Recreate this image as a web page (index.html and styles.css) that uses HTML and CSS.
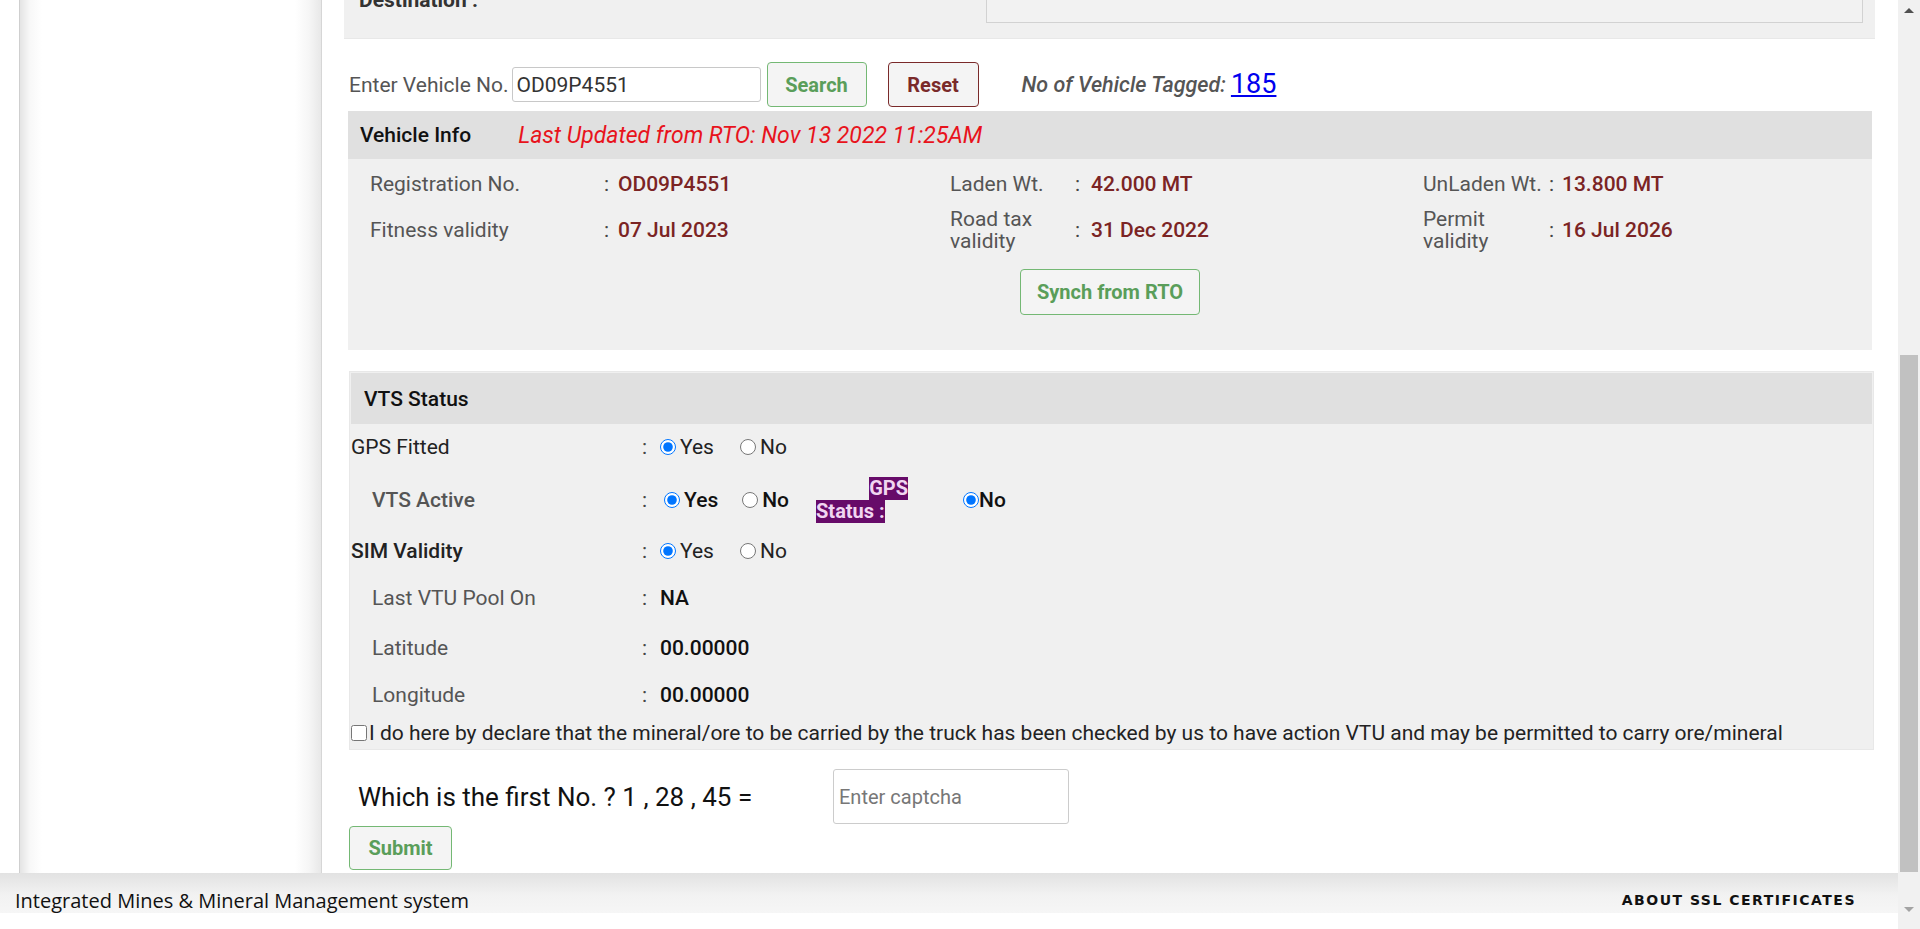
FILE: index.html
```html
<!DOCTYPE html>
<html lang="en">
<head>
<meta charset="utf-8">
<title>Vehicle Tagging</title>
<link rel="stylesheet" href="styles.css">
</head>
<body>
<div class="app">
  <div class="page">
    <div class="main">
      <aside class="sidebar"><div class="sidebar-inner"></div></aside>
      <section class="content">
        <div class="dest-box">
          <div class="dest-label">Destination :</div>
          <div class="dest-field"></div>
        </div>

        <div class="search-row">
          <label class="search-label" for="veh">Enter Vehicle No.</label>
          <input id="veh" class="search-input" type="text" value="OD09P4551">
          <button class="btn btn-green btn-search">Search</button>
          <button class="btn btn-red btn-reset">Reset</button>
          <span class="tagged">No of Vehicle Tagged:</span><a class="tagged-link" href="#">185</a>
        </div>

        <div class="vehicle">
          <div class="panel-head">
            <span class="head-title">Vehicle Info</span>
            <span class="rto-note">Last Updated from RTO: Nov 13 2022 11:25AM</span>
          </div>
          <div class="vinfo-grid">
            <span class="vlabel">Registration No.</span><span class="vcolon">:</span><span class="vvalue">OD09P4551</span>
            <span class="vlabel">Laden Wt.</span><span class="vcolon">:</span><span class="vvalue">42.000 MT</span>
            <span class="vlabel">UnLaden Wt.</span><span class="vcolon">:</span><span class="vvalue">13.800 MT</span>

            <span class="vlabel">Fitness validity</span><span class="vcolon">:</span><span class="vvalue">07 Jul 2023</span>
            <span class="vlabel">Road tax validity</span><span class="vcolon">:</span><span class="vvalue">31 Dec 2022</span>
            <span class="vlabel">Permit validity</span><span class="vcolon">:</span><span class="vvalue">16 Jul 2026</span>
          </div>
          <div class="synch-row"><button class="btn btn-green btn-synch">Synch from RTO</button></div>
        </div>

        <div class="vts">
          <div class="vts-head">VTS Status</div>
          <div class="vts-grid">
            <span class="tlabel plain">GPS Fitted</span><span class="tcolon">:</span>
            <span class="tvalue">
              <label class="opt"><input type="radio" name="gps" checked>Yes</label>
              <label class="opt"><input type="radio" name="gps">No</label>
            </span>

            <span class="tlabel indent semibold">VTS Active</span><span class="tcolon">:</span>
            <span class="tvalue vts-active">
              <label class="opt strong"><input type="radio" name="vts" checked>Yes</label>
              <label class="opt strong"><input type="radio" name="vts">No</label>
              <span class="gps-status"><span class="gps-l1">GPS</span><span class="gps-l2">Status :</span></span>
              <label class="opt strong gps-no"><input type="radio" name="gpsst" checked>No</label>
            </span>

            <span class="tlabel plain bold">SIM Validity</span><span class="tcolon">:</span>
            <span class="tvalue">
              <label class="opt"><input type="radio" name="sim" checked>Yes</label>
              <label class="opt"><input type="radio" name="sim">No</label>
            </span>

            <span class="tlabel indent">Last VTU Pool On</span><span class="tcolon">:</span><span class="tvalue data">NA</span>
            <span class="tlabel indent">Latitude</span><span class="tcolon">:</span><span class="tvalue data">00.00000</span>
            <span class="tlabel indent">Longitude</span><span class="tcolon">:</span><span class="tvalue data">00.00000</span>
          </div>
          <label class="declare"><input type="checkbox">I do here by declare that the mineral/ore to be carried by the truck has been checked by us to have action VTU and may be permitted to carry ore/mineral</label>
        </div>

        <div class="captcha-row">
          <span class="captcha-q">Which is the first No. ? 1 , 28 , 45 =</span>
          <input class="captcha-input" type="text" placeholder="Enter captcha">
        </div>
        <button class="btn btn-green btn-submit">Submit</button>
      </section>
    </div>
    <footer class="footer">
      <span class="footer-title">Integrated Mines &amp; Mineral Management system</span>
      <a class="footer-link" href="#">ABOUT SSL CERTIFICATES</a>
    </footer>
    <div class="bottom-gap"></div>
  </div>
  <div class="scrollbar">
    <div class="sb-btn"><span class="sb-up"></span></div>
    <div class="sb-thumb"></div>
    <div class="sb-rest"></div>
    <div class="sb-btn sb-btn-down"><span class="sb-down"></span></div>
  </div>
</div>
</body>
</html>
```

FILE: styles.css
```css
* { box-sizing: border-box; }
html, body { margin: 0; height: 100%; overflow: hidden; }
body {
  font-family: Roboto, "Noto Sans", sans-serif;
  font-size: 21px;
  color: #222;
  background: #fff;
}
.app { display: grid; grid-template-columns: 1fr 22px; height: 929px; }
.page { display: flex; flex-direction: column; min-width: 0; }
.main { flex: 1; display: flex; overflow: hidden; min-height: 0; }

/* sidebar */
.sidebar { width: 322px; flex: none; padding-left: 19px; border-right: 1px solid #d6d6d6; }
.sidebar-inner {
  height: 100%;
  border-left: 1px solid #cfcfcf;
  background: linear-gradient(to right, #e4e4e4 0, #f8f8f8 10px, #fff 22px, #fff calc(100% - 26px), #f6f6f6 calc(100% - 12px), #e8e8e8 100%);
}

/* content */
.content { flex: 1; min-width: 0; padding: 0 23px 0 22px; }

.dest-box {
  display: flex; height: 60px; margin-top: -22px;
  background: #f0f0f0; box-shadow: 0 1px 0 #e8e8e8; padding-right: 12px;
}
.dest-label { font-weight: 700; color: #333; padding: 10px 0 0 15px; line-height: 24px; }
.dest-field { margin-left: auto; width: 877px; height: 45px; border: 1px solid #d2d2d2; border-top: none; background: #f2f2f2; }

.search-row { display: flex; align-items: center; height: 45px; margin-top: 24px; padding-left: 5px; }
.search-label { color: #555; margin-right: 3px; }
.search-input {
  width: 249px; height: 35px; border: 1px solid #c8c8c8; border-radius: 3px;
  font: 21px Roboto, sans-serif; color: #333; padding: 0 4px; margin: 0 6px 0 0;
}
.btn { height: 45px; border-radius: 4px; background: #f4f4f4; font: 700 20px Roboto, sans-serif; padding: 0; }
.btn-green { color: #5a9e5a; border: 1px solid #74b874; }
.btn-red { color: #7a2a2a; border: 1px solid #7a2a2a; }
.btn-search { width: 100px; margin-right: 21px; }
.btn-reset { width: 91px; margin-right: 43px; }
.tagged { font-style: italic; font-weight: 500; color: #555; font-size: 21.5px; }
.tagged-link { font-size: 27px; color: #0000ee; margin-left: 5px; line-height: 1; }

.vehicle { margin: 4px 3px 0 4px; background: #f0f0f0; padding-bottom: 35px; }
.panel-head { height: 48px; background: #e0e0e0; display: flex; align-items: center; padding-left: 12px; }
.head-title { font-weight: 500; color: #111; }
.rto-note { font-style: italic; color: #e8131c; margin-left: 47px; font-size: 23px; }
.vinfo-grid {
  display: grid;
  grid-template-columns: 234px 14px 332px 125px 16px 332px 126px 13px 1fr;
  grid-template-rows: 36px 44px;
  row-gap: 6px; padding: 7px 0 0 22px; align-items: center;
}
.vlabel { color: #555; line-height: 22px; padding-right: 5px; }
.vcolon { color: #444; }
.vvalue { color: #7b2424; font-weight: 500; }
.synch-row { display: flex; justify-content: center; margin-top: 17px; }
.btn-synch { width: 180px; height: 46px; }

.vts { margin: 21px 1px 0 5px; background: #f0f0f0; border: 1px solid #e8e8e8; padding: 1px; }
.vts-head { height: 51px; background: #e0e0e0; display: flex; align-items: center; padding-left: 13px; font-weight: 500; color: #111; }
.vts-grid {
  display: grid;
  grid-template-columns: 291px 18px 1fr;
  grid-template-rows: 46px 60px 42px 52px 48px 46px;
  align-items: center;
}
.tlabel { color: #555; }
.tlabel.plain { color: #222; }
.tlabel.indent { padding-left: 21px; }
.tlabel.bold { font-weight: 500; }
.tlabel.semibold { font-weight: 500; }
.tcolon { color: #444; }
.tvalue { display: flex; align-items: center; }
.tvalue.data { font-weight: 500; color: #111; }
.opt { display: inline-flex; align-items: center; gap: 4px; margin-right: 26px; color: #222; }
.opt.strong { font-weight: 500; color: #111; margin-right: 24px; }
.opt input { width: 16px; height: 16px; margin: 0; }
.vts-active { padding-left: 4px; }
.gps-status { display: inline-flex; flex-direction: column; width: 92px; margin-left: 3px; font-weight: 700; font-size: 20px; line-height: 23px; color: #f1d6f1; }
.gps-l1 { align-self: flex-end; background: #670b69; }
.gps-l2 { align-self: flex-start; background: #670b69; }
.gps-no { margin-left: 55px; gap: 0; }
.declare { display: flex; align-items: center; height: 30px; color: #222; }
.declare input { width: 16px; height: 16px; margin: 0 2px 0 0; }

.captcha-row { display: flex; align-items: center; margin-top: 19px; height: 55px; }
.captcha-q { width: 489px; padding-left: 14px; font-size: 26px; color: #111; }
.captcha-input { width: 236px; height: 55px; border: 1px solid #ccc; border-radius: 3px; font: 20px Roboto, sans-serif; padding: 0 5px; }
.captcha-input::placeholder { color: #777; }
.btn-submit { display: block; width: 103px; height: 44px; margin: 2px 0 0 5px; }

/* footer */
.footer {
  height: 40px; flex: none; display: flex; align-items: center; justify-content: space-between;
  padding: 14px 42px 0 15px;
  background: linear-gradient(#e2e2e2, #f2f2f2 55%, #f6f6f6);
}
.footer-title { font-family: "Open Sans", sans-serif; font-size: 20px; color: #111; }
.footer-link { font-family: "DejaVu Sans", Verdana, sans-serif; font-weight: 700; font-size: 14px; letter-spacing: 1.5px; color: #111; text-decoration: none; }
.bottom-gap { height: 16px; flex: none; }

/* scrollbar */
.scrollbar { background: #f1f1f1; display: flex; flex-direction: column; align-items: center; }
.sb-btn { height: 20px; width: 100%; display: flex; align-items: center; justify-content: center; flex: none; }
.sb-up { width: 0; height: 0; border-left: 5px solid transparent; border-right: 5px solid transparent; border-bottom: 5px solid #505050; }
.sb-down { width: 0; height: 0; border-left: 5px solid transparent; border-right: 5px solid transparent; border-top: 5px solid #a3a3a3; }
.sb-thumb { width: 18px; height: 517px; margin-top: 335px; background: #c1c1c1; flex: none; }
.sb-rest { flex: 1; }
.sb-btn-down { height: 34px; align-items: flex-start; padding-top: 12px; }
```
